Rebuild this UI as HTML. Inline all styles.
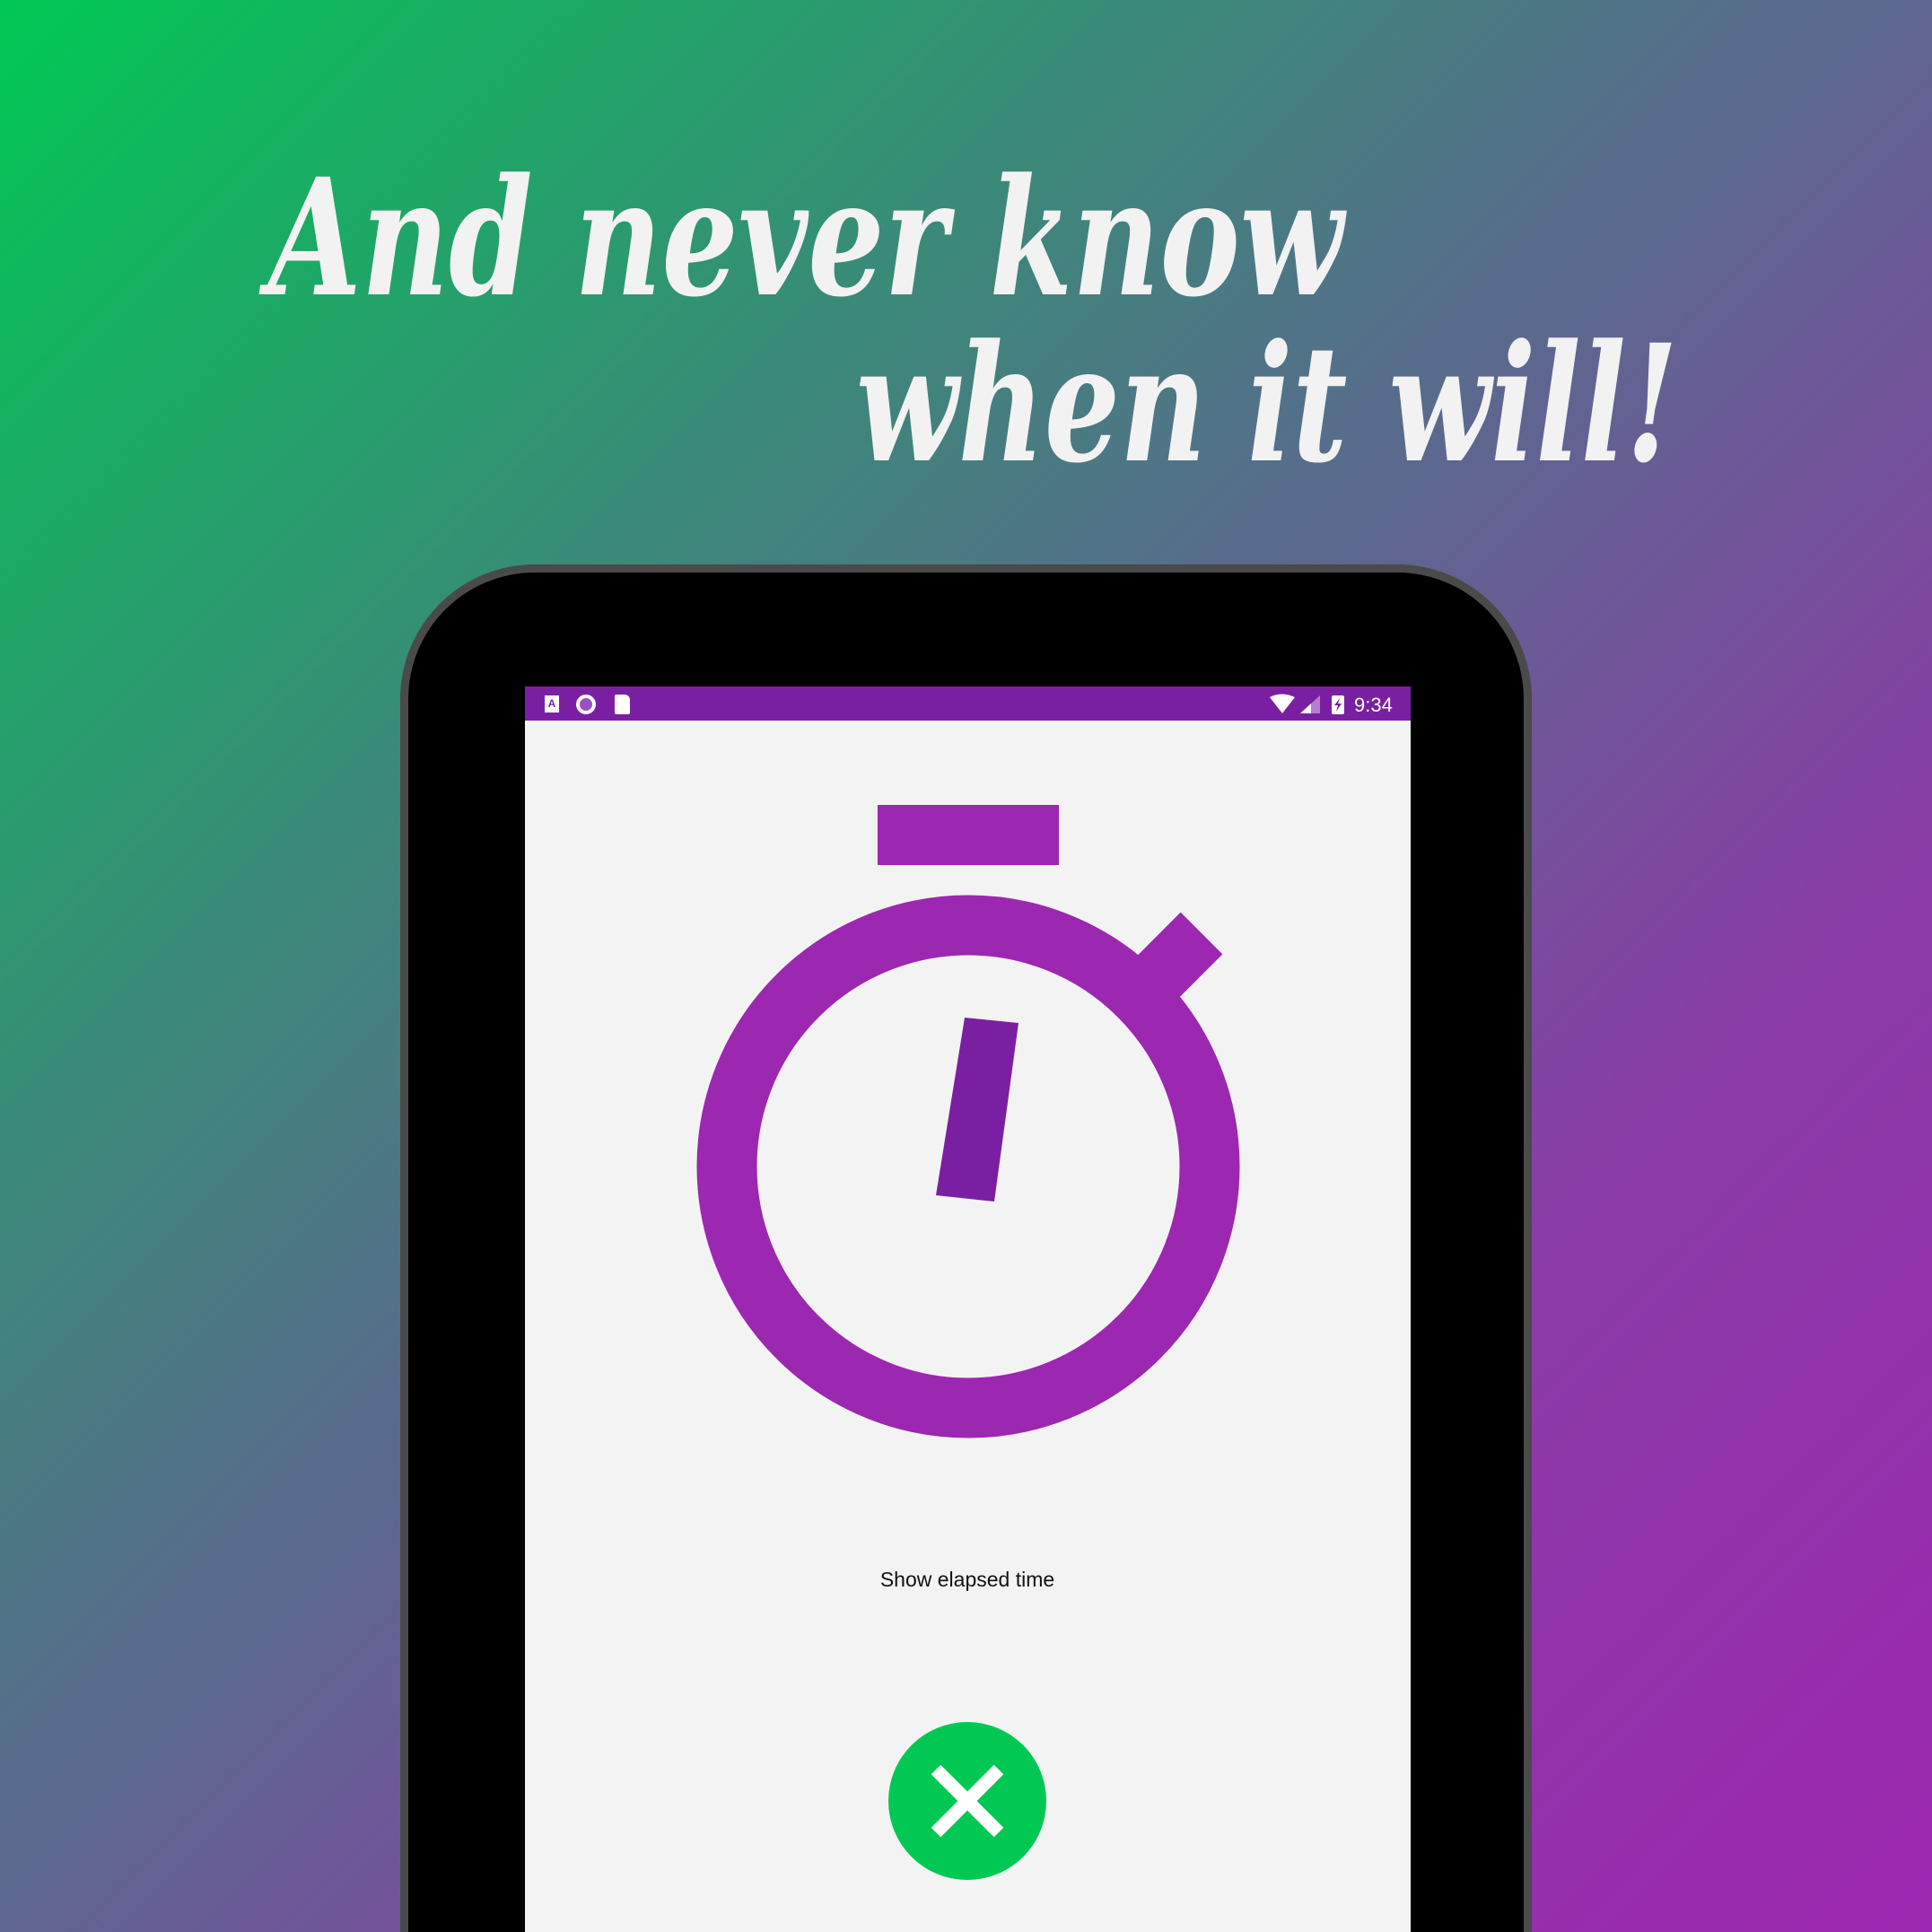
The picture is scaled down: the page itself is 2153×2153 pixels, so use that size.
<!DOCTYPE html>
<html><head><meta charset="utf-8"><style>
html,body{margin:0;padding:0;width:2153px;height:2153px;overflow:hidden}
html{background:#5e6690}
body{position:relative;background:linear-gradient(135deg,#00c853 0%,#3a8a78 30%,#5e6690 50%,#8a3ca6 72%,#9c27b0 100%);font-family:"Liberation Sans",sans-serif}
.tab{position:absolute;left:446px;top:629px;width:1261px;height:1524px;background:#000;border-radius:150px 150px 0 0;border:9px solid #4a4a4a;border-bottom:0;box-sizing:border-box}
.screen{position:absolute;left:585px;top:765px;width:987px;height:1388px;background:#f3f3f3}
.sb{position:absolute;left:0;top:0;width:987px;height:38px;background:#7b1fa2;color:#fff}
</style></head><body>
<svg width="2153" height="640" style="position:absolute;left:0;top:0">
<text x="299" y="328" textLength="1198" lengthAdjust="spacingAndGlyphs" font-family="DejaVu Serif" font-style="italic" font-weight="bold" font-size="180" fill="#f2f2f2">And never know</text>
<text x="954" y="513" textLength="916" lengthAdjust="spacingAndGlyphs" font-family="DejaVu Serif" font-style="italic" font-weight="bold" font-size="180" fill="#f2f2f2">when it will!</text>
</svg>
<div class="tab"></div>
<div class="screen">
<div class="sb">
<div style="position:absolute;left:22px;top:10px;width:16px;height:19px;background:#fff;color:#7b1fa2;font-size:12px;font-weight:bold;text-align:center;line-height:19px">A</div>
<div style="position:absolute;left:57px;top:9px;width:14px;height:14px;border:4px solid #fff;border-radius:50%;background:#9c4fc0"></div>
<div style="position:absolute;left:100px;top:9px;width:17px;height:22px;background:#fff;border-radius:2px 6px 2px 2px"></div>
<svg style="position:absolute;left:828px;top:8px" width="150" height="24">
<path d="M2 4 Q15 -3 30 4 L16 22 Z" fill="#fff"/>
<path d="M36 22 L58 2 L58 22 Z" fill="#b47fd0"/><path d="M36 22 L48 11 L48 22 Z" fill="#fff"/>
<rect x="71" y="2" width="14" height="21" rx="2" fill="#fff"/><path d="M80 5 L74 13 L78 13 L76 20 L82 11 L78 11 Z" fill="#7b1fa2"/>
<text x="96" y="20" font-family="Liberation Sans" font-size="22" fill="#fff">9:34</text>
</svg>
</div>
</div>
<svg width="2153" height="2153" style="position:absolute;left:0;top:0">
<rect x="978" y="897" width="202" height="67" fill="#9c27b0"/>
<circle cx="1079" cy="1300" r="269" fill="none" stroke="#9c27b0" stroke-width="67"/>
<line x1="1250" y1="1129" x2="1339" y2="1040" stroke="#9c27b0" stroke-width="66"/>
<polygon points="1075,1134 1135,1140 1108,1339 1043,1332" fill="#7b1fa2"/>
<text x="1078" y="1768" text-anchor="middle" font-family="Liberation Sans" font-size="23" fill="#111">Show elapsed time</text>
<circle cx="1078" cy="2007" r="88" fill="#00c853"/>
<path d="M1043 1972 L1113 2042 M1113 1972 L1043 2042" stroke="#fff" stroke-width="15"/>
</svg>
</body></html>
